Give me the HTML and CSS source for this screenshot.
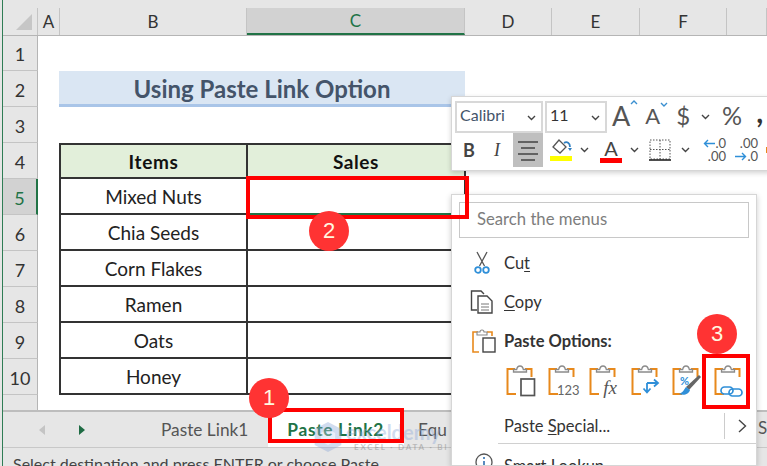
FILE: index.html
```html
<!DOCTYPE html>
<html lang="en">
<head>
<meta charset="UTF-8">
<meta name="viewport" content="width=device-width, initial-scale=1.0">
<title>Using Paste Link Option</title>
<link rel="stylesheet" href="styles.css">
</head>
<body>
  <svg class="defs" width="0" height="0">
    <symbol id="clip" viewBox="0 0 28 32">
      <path d="M9 4H1.500v25H10" fill="none" stroke="#e8891c" stroke-width="2"/>
      <path d="M19 4h6.500v8" fill="none" stroke="#e8891c" stroke-width="2"/>
      <path d="M7.500 7V4.500h3.200C11 2.500 12.200 1 14 1s3 1.500 3.300 3.500h3.200V7z" fill="#fff" stroke="#8a8a8a" stroke-width="1.300"/>
    </symbol>
  </svg>

  <div class="app">
    <div class="top-strip"></div>

    <div class="col-heads">
      <div class="corner"><span class="corner-tri"></span></div>
      <div class="col-head col-a">A</div>
      <div class="col-head col-b">B</div>
      <div class="col-head col-c selected">C</div>
      <div class="col-head col-d">D</div>
      <div class="col-head col-e">E</div>
      <div class="col-head col-f">F</div>
      <div class="col-head col-g"></div>
    </div>

    <div class="sheet">
      <div class="row row-first"><div class="row-num">1</div></div>
      <div class="row">
        <div class="row-num">2</div>
        <div class="gutter"></div>
        <div class="title-band">Using Paste Link Option</div>
      </div>
      <div class="row"><div class="row-num">3</div></div>
      <div class="row">
        <div class="row-num">4</div>
        <div class="gutter"></div>
        <div class="cell col-b head first-row">Items</div>
        <div class="cell col-c head first-row">Sales</div>
      </div>
      <div class="row">
        <div class="row-num selected">5</div>
        <div class="gutter"></div>
        <div class="cell col-b">Mixed Nuts</div>
        <div class="cell col-c active"></div>
      </div>
      <div class="row">
        <div class="row-num">6</div>
        <div class="gutter"></div>
        <div class="cell col-b">Chia Seeds</div>
        <div class="cell col-c"></div>
      </div>
      <div class="row">
        <div class="row-num">7</div>
        <div class="gutter"></div>
        <div class="cell col-b">Corn Flakes</div>
        <div class="cell col-c"></div>
      </div>
      <div class="row">
        <div class="row-num">8</div>
        <div class="gutter"></div>
        <div class="cell col-b">Ramen</div>
        <div class="cell col-c"></div>
      </div>
      <div class="row">
        <div class="row-num">9</div>
        <div class="gutter"></div>
        <div class="cell col-b">Oats</div>
        <div class="cell col-c"></div>
      </div>
      <div class="row">
        <div class="row-num">10</div>
        <div class="gutter"></div>
        <div class="cell col-b">Honey</div>
        <div class="cell col-c"></div>
      </div>
      <div class="row row-last"><div class="row-num"></div></div>
    </div>

    <div class="tabs">
      <div class="tab-arrows">
        <span class="arrow arrow-left"></span>
        <span class="arrow arrow-right"></span>
      </div>
      <div class="tab">Paste Link1</div>
      <div class="tab tab-active">Paste Link2</div>
      <div class="tab tab-next">Equ</div>
    </div>

    <div class="status">Select destination and press ENTER or choose Paste</div>
  </div>

  <div class="watermark">
    <svg class="wm-logo" width="32" height="32" viewBox="0 0 36 36">
      <path d="M18 1l15 8v18l-15 8-15-8V9z" fill="#8fa9d8"/>
      <path d="M18 9l8 4.500v9l-8 4.500-8-4.500v-9z" fill="#c9d6ee"/>
    </svg>
    <div class="wm-text">
      <div class="wm-name">exceldemy</div>
      <div class="wm-sub">EXCEL · DATA · BI</div>
    </div>
  </div>

  <!-- mini toolbar -->
  <div class="mini-bar">
    <div class="mini-row">
      <div class="combo combo-font">Calibri
        <svg class="chev" width="9" height="6" viewBox="0 0 9 6"><path d="M1 1l3.500 3.500L8 1" fill="none" stroke="#444" stroke-width="1.400"/></svg>
      </div>
      <div class="combo combo-size">11
        <svg class="chev" width="9" height="6" viewBox="0 0 9 6"><path d="M1 1l3.500 3.500L8 1" fill="none" stroke="#444" stroke-width="1.400"/></svg>
      </div>
      <div class="tool grow-a">A<svg width="8" height="6" viewBox="0 0 8 6"><path d="M1 5l3-3 3 3" fill="none" stroke="#3a8fd0" stroke-width="1.400"/></svg></div>
      <div class="tool shrink-a">A<svg width="8" height="6" viewBox="0 0 8 6"><path d="M1 1l3 3 3-3" fill="none" stroke="#3a8fd0" stroke-width="1.400"/></svg></div>
      <div class="tool dollar">$</div>
      <svg class="chev" width="9" height="6" viewBox="0 0 9 6"><path d="M1 1l3.500 3.500L8 1" fill="none" stroke="#444" stroke-width="1.400"/></svg>
      <div class="tool percent">%</div>
      <div class="tool comma">,</div>
    </div>
    <div class="mini-row mini-row-two">
      <div class="fmt fmt-b">B</div>
      <div class="fmt fmt-i">I</div>
      <div class="fmt fmt-align">
        <svg width="22" height="22" viewBox="0 0 22 22"><path d="M1 3h20M4 9h14M1 15h20M4 21h14" stroke="#444" stroke-width="1.500"/></svg>
      </div>
      <div class="fmt fmt-fill">
        <svg width="22" height="24" viewBox="0 0 22 24">
          <path d="M9 2l7 7-6 6-7-6z" fill="#fff" stroke="#555" stroke-width="1.300"/>
          <path d="M14 5c3-2 6 0 6 4" fill="none" stroke="#2f7fc1" stroke-width="1.800"/>
          <path d="M18 10l2 3 2-3z" fill="#2f7fc1"/>
          <rect y="18" width="22" height="5" fill="#ffff00"/>
        </svg>
      </div>
      <svg class="chev chev-fill" width="9" height="6" viewBox="0 0 9 6"><path d="M1 1l3.500 3.500L8 1" fill="none" stroke="#444" stroke-width="1.400"/></svg>
      <div class="fmt fmt-color"><span>A</span><span class="color-bar"></span></div>
      <svg class="chev chev-color" width="9" height="6" viewBox="0 0 9 6"><path d="M1 1l3.500 3.500L8 1" fill="none" stroke="#444" stroke-width="1.400"/></svg>
      <div class="fmt fmt-border">
        <svg width="22" height="22" viewBox="0 0 22 22">
          <path d="M1 1h20v19H1zM11 1v19M1 10.500h20" fill="none" stroke="#555" stroke-width="1" stroke-dasharray="1.500 1.500"/>
          <path d="M0 21h22" stroke="#222" stroke-width="1.600"/>
        </svg>
      </div>
      <svg class="chev chev-border" width="9" height="6" viewBox="0 0 9 6"><path d="M1 1l3.500 3.500L8 1" fill="none" stroke="#444" stroke-width="1.400"/></svg>
      <div class="dec">
        <span class="dec-line"><svg width="12" height="9" viewBox="0 0 12 9"><path d="M12 4.500H2M5 1L1.500 4.500 5 8" fill="none" stroke="#2f8fd8" stroke-width="1.400"/></svg>.0</span>
        <span class="dec-line dec-low">.00</span>
      </div>
      <div class="dec dec-two">
        <span class="dec-line">.00</span>
        <span class="dec-line dec-low"><svg width="12" height="9" viewBox="0 0 12 9"><path d="M0 4.500h10M7 1l3.500 3.500L7 8" fill="none" stroke="#2f8fd8" stroke-width="1.400"/></svg>.0</span>
      </div>
      <span class="more-dot"></span>
    </div>
  </div>

  <!-- context menu -->
  <div class="menu">
    <div class="menu-search">Search the menus</div>

    <div class="menu-item item-cut">
      <svg class="menu-icon" width="16" height="24" viewBox="0 0 16 24">
        <path d="M3 1l7.500 14M13 1L5.500 15" fill="none" stroke="#555" stroke-width="1.300"/>
        <circle cx="4" cy="19" r="2.800" fill="none" stroke="#2f8fd8" stroke-width="1.800"/>
        <circle cx="12" cy="19" r="2.800" fill="none" stroke="#2f8fd8" stroke-width="1.800"/>
      </svg>
      <span>Cu<u>t</u></span>
    </div>
    <div class="menu-item item-copy">
      <svg class="menu-icon" width="24" height="24" viewBox="0 0 24 24">
        <path d="M7 20H1.500V1H11l3 3" fill="none" stroke="#444" stroke-width="1.400"/>
        <path d="M8 6h9l5 5v12H8z" fill="#fff" stroke="#444" stroke-width="1.400"/>
        <path d="M11 14h8M11 17h8M11 20h8" stroke="#777" stroke-width="1"/>
      </svg>
      <span><u>C</u>opy</span>
    </div>
    <div class="menu-item item-options">
      <svg class="menu-icon" width="24" height="24" viewBox="0 0 24 24">
        <path d="M6 3H1v20h6M15 3h5v4" fill="none" stroke="#e8891c" stroke-width="1.600"/>
        <path d="M5 6V3h3c0-1.500 1-2 2-2s2 .5 2 2h3v3z" fill="#fff" stroke="#888" stroke-width="1.100"/>
        <rect x="11" y="9" width="12" height="14" fill="#fff" stroke="#444" stroke-width="1.400"/>
      </svg>
      <strong>Paste Options:</strong>
    </div>

    <div class="paste-icons">
      <svg class="paste-icon" width="30" height="32" viewBox="0 0 30 32">
        <use href="#clip" width="28" height="32"/>
        <rect x="15" y="14" width="13.500" height="16.500" fill="#fff" stroke="#555" stroke-width="1.700"/>
      </svg>
      <div class="paste-icon paste-values">
        <svg width="28" height="32"><use href="#clip" width="28" height="32"/></svg>
        <span class="paste-mark mark-123">123</span>
      </div>
      <div class="paste-icon paste-values">
        <svg width="28" height="32"><use href="#clip" width="28" height="32"/></svg>
        <span class="paste-mark mark-fx">fx</span>
      </div>
      <svg class="paste-icon" width="30" height="32" viewBox="0 0 30 32">
        <use href="#clip" width="28" height="32"/>
        <path d="M16 18v9M12.500 23.500L16 27.500l3.500-4M16 18h11M23 14.500l4 3.500-4 3.500" fill="none" stroke="#2f8fd8" stroke-width="1.800"/>
      </svg>
      <div class="paste-icon paste-values">
        <svg width="30" height="32" viewBox="0 0 30 32">
          <use href="#clip" width="28" height="32"/>
          <path d="M14 22L27 10l2 2-12 13z" fill="#666"/>
          <path d="M14 22c-2 2-2 5-7 7 5 2 10 0 11-4z" fill="#2f8fd8"/>
        </svg>
        <span class="paste-mark mark-pct">%</span>
      </div>
      <svg class="paste-icon" width="30" height="32" viewBox="0 0 30 32">
        <use href="#clip" width="28" height="32"/>
        <rect x="7" y="22" width="12" height="7" rx="3.500" fill="#fff" stroke="#2f8fd8" stroke-width="1.700"/>
        <rect x="15" y="24" width="13" height="7" rx="3.500" fill="none" stroke="#2f8fd8" stroke-width="1.700"/>
      </svg>
    </div>

    <div class="menu-item item-special">
      <span>Paste <u>S</u>pecial...</span>
      <span class="submenu">
        <svg width="9" height="14" viewBox="0 0 9 14"><path d="M1 1l6.500 6L1 13" fill="none" stroke="#444" stroke-width="1.400"/></svg>
      </span>
    </div>
    <div class="menu-sep"></div>
    <div class="menu-item item-lookup">
      <svg class="menu-icon" width="18" height="18" viewBox="0 0 18 18">
        <circle cx="9" cy="9" r="8" fill="none" stroke="#555" stroke-width="1.300"/>
        <path d="M9 4v2M9 8v6" stroke="#2f6fb0" stroke-width="1.600"/>
      </svg>
      <span>Smart Lookup</span>
    </div>
  </div>

  <div class="tab-cut">SU</div>

  <!-- red annotations -->
  <div class="mark-box box-cell"></div>
  <div class="mark-box box-tab"></div>
  <div class="mark-box box-link"></div>
  <div class="callout call-1">1</div>
  <div class="callout call-2">2</div>
  <div class="callout call-3">3</div>
</body>
</html>
```

FILE: styles.css
```css
* {
  box-sizing: border-box;
}
html, body {
  margin: 0;
  padding: 0;
  overflow: hidden;
}
body {
  position: relative;
  width: 767px;
  height: 466px;
  background: #e6e6e6;
  font-family: 'Lato', 'Liberation Sans', sans-serif;
  color: #222;
}
.defs {
  position: absolute;
}
.app {
  display: flex;
  flex-direction: column;
  height: 466px;
  margin-left: 2px;
  border-left: 1px solid #2f7d55;
}
.top-strip {
  height: 8px;
  flex: none;
  background: #e6e6e6;
}

/* column headers */
.col-heads {
  display: flex;
  height: 28px;
  flex: none;
  background: #e6e6e6;
  border-bottom: 1px solid #b5b5b5;
}
.corner {
  width: 35px;
  flex: none;
  display: flex;
  justify-content: flex-end;
  align-items: flex-end;
  padding: 0 5px 5px 0;
  border-right: 1px solid #c4c4c4;
}
.corner-tri {
  width: 0;
  height: 0;
  border-left: 16px solid transparent;
  border-bottom: 16px solid #c6c6c6;
}
.col-head {
  display: flex;
  align-items: center;
  justify-content: center;
  flex: none;
  font-size: 17px;
  color: #333;
  border-right: 1px solid #c4c4c4;
}
.col-a { width: 22px; }
.col-b { width: 187px; }
.col-c { width: 218px; }
.col-d { width: 87px; }
.col-e { width: 88px; }
.col-f { width: 87px; }
.col-g { flex: 1; }
.col-head.selected {
  background: #d2d2d2;
  color: #217346;
  border-bottom: 2px solid #217346;
}

/* sheet */
.sheet {
  flex: 1;
  background: #fff;
  display: flex;
  flex-direction: column;
}
.row {
  display: flex;
  height: 36px;
  flex: none;
}
.row-first {
  height: 35px;
}
.row-last {
  flex: 1;
}
.row-num {
  width: 35px;
  flex: none;
  display: flex;
  align-items: center;
  justify-content: center;
  padding-top: 2px;
  background: #e6e6e6;
  border-right: 1px solid #b5b5b5;
  border-bottom: 1px solid #c4c4c4;
  font-size: 18px;
  color: #333;
}
.row-last .row-num {
  border-bottom: 0;
}
.row-num.selected {
  background: #d2d2d2;
  color: #217346;
  border-right: 2px solid #217346;
}
.gutter {
  width: 21px;
  flex: none;
}
.title-band {
  width: 406px;
  display: flex;
  align-items: center;
  justify-content: center;
  padding-top: 2px;
  background: #dae6f3;
  border-bottom: 3px solid #a9c5e8;
  font-size: 24px;
  font-weight: 700;
  color: #44546a;
}
.cell {
  display: flex;
  align-items: center;
  justify-content: center;
  padding-top: 1px;
  border-bottom: 2px solid #333;
  border-right: 2px solid #333;
  font-size: 19px;
  color: #222;
}
.cell.col-b {
  width: 189px;
  border-left: 2px solid #333;
}
.cell.col-c {
  width: 218px;
}
.cell.head {
  background: #e2efda;
  font-weight: 700;
  letter-spacing: 0.6px;
  color: #111;
}
.cell.first-row {
  border-top: 2px solid #333;
}
.cell.active {
  border-bottom-color: #217346;
}

/* sheet tabs */
.tabs {
  display: flex;
  align-items: stretch;
  height: 38px;
  flex: none;
  background: #e6e6e6;
  border-top: 2px solid #bdbdbd;
  border-bottom: 1px solid #c8c8c8;
  font-size: 17.300px;
  color: #555;
}
.tab-arrows {
  width: 138px;
  flex: none;
  display: flex;
  align-items: center;
  gap: 34px;
  padding-left: 36px;
}
.tab-arrows::after {
  content: "";
  width: 1px;
  height: 26px;
  margin-left: 22px;
  background: #aaa;
}
.arrow {
  width: 0;
  height: 0;
  border-top: 5px solid transparent;
  border-bottom: 5px solid transparent;
}
.arrow-left {
  border-right: 6px solid #c4c4c4;
}
.arrow-right {
  border-left: 6px solid #1e6b43;
}
.tab {
  display: flex;
  align-items: center;
  padding: 0 20px;
}
.tab-active {
  background: #fff;
  padding: 0 20px 0 19px;
  font-weight: 700;
  letter-spacing: 0.7px;
  color: #217346;
}
.tab-next {
  padding-left: 14px;
}
.tab-cut {
  position: absolute;
  left: 758px;
  top: 418px;
  line-height: 20px;
  font-size: 17px;
  color: #555;
}
.status {
  height: 18px;
  flex: none;
  overflow: hidden;
  padding: 6px 0 0 10px;
  font-size: 16px;
  line-height: 20px;
  color: #444;
  white-space: nowrap;
  background: #e6e6e6;
}

/* watermark over the tabs */
.watermark {
  position: absolute;
  left: 312px;
  top: 421px;
  display: flex;
  align-items: center;
  gap: 2px;
  opacity: 0.4;
}
.wm-name {
  font-size: 20px;
  line-height: 19px;
  font-weight: 700;
  color: #8fa9d8;
}
.wm-sub {
  font-size: 8px;
  line-height: 10px;
  letter-spacing: 1.800px;
  font-weight: 700;
  color: #777;
  padding-left: 8px;
}

/* mini toolbar */
.mini-bar {
  position: absolute;
  left: 451px;
  top: 96px;
  width: 320px;
  height: 75px;
  padding: 4px 0 0 3px;
  background: #fff;
  border: 1px solid #d6d6d6;
  box-shadow: 0 2px 5px rgba(0,0,0,0.18);
}
.mini-row {
  display: flex;
  align-items: center;
  height: 32px;
}
.combo {
  position: relative;
  height: 32px;
  display: flex;
  align-items: center;
  padding: 0 0 5px 3px;
  border: 2px solid #d8d8d8;
  font-size: 16px;
  color: #44546a;
}
.combo-font {
  width: 88px;
}
.combo-size {
  width: 62px;
  margin-left: 2px;
  color: #333;
}
.combo .chev {
  position: absolute;
  right: 5px;
  top: 12px;
}
.tool {
  display: flex;
  color: #555;
  padding-bottom: 4px;
}
.grow-a {
  margin-left: 5px;
  font-size: 27px;
}
.shrink-a {
  margin-left: 7px;
  font-size: 22px;
}
.dollar {
  margin-left: 8px;
  margin-right: 11px;
  font-size: 24px;
}
.percent {
  margin-left: 12px;
  font-size: 25px;
}
.comma {
  margin-left: 14px;
  padding-bottom: 12px;
  font-size: 30px;
  font-weight: 700;
  color: #333;
}
.mini-row-two {
  height: 34px;
}
.fmt {
  flex: none;
  display: flex;
  align-items: center;
  justify-content: center;
  height: 34px;
  color: #444;
}
.fmt-b {
  width: 24px;
  margin-left: 2px;
  font-size: 18px;
  font-weight: 700;
}
.fmt-i {
  width: 32px;
  font-size: 18px;
  font-style: italic;
  font-family: 'Liberation Serif', serif;
}
.fmt-align {
  width: 30px;
  background: #bfbfbf;
}
.fmt-fill {
  width: 22px;
  margin-left: 7px;
}
.chev-fill {
  margin-left: 8px;
}
.fmt-color {
  width: 22px;
  margin-left: 11px;
  flex-direction: column;
  font-size: 20px;
  line-height: 20px;
}
.color-bar {
  width: 22px;
  height: 5px;
  background: #ff0000;
}
.chev-color {
  margin-left: 8px;
}
.fmt-border {
  width: 22px;
  margin-left: 10px;
}
.chev-border {
  margin-left: 10px;
}
.dec {
  display: flex;
  flex-direction: column;
  width: 24px;
  margin-left: 12px;
  font-size: 13px;
  line-height: 13px;
  color: #555;
  text-align: right;
}
.dec-two {
  margin-left: 8px;
}
.dec-line {
  display: flex;
  justify-content: flex-end;
  align-items: center;
}
.more-dot {
  width: 4px;
  height: 6px;
  margin-left: 8px;
  background: #e8891c;
}

/* context menu */
.menu {
  position: absolute;
  left: 451px;
  top: 194px;
  width: 306px;
  height: 272px;
  overflow: hidden;
  padding: 7px;
  background: #fff;
  border: 1px solid #d6d6d6;
  box-shadow: 0 2px 6px rgba(0,0,0,0.2);
  font-size: 16.500px;
  color: #333;
}
.menu-search {
  height: 36px;
  display: flex;
  align-items: center;
  padding: 0 0 2px 17px;
  border: 1px solid #c8c8c8;
  color: #7d7d7d;
  font-size: 16.700px;
}
.menu-item {
  position: relative;
  display: flex;
  align-items: center;
  height: 39px;
  padding-left: 45px;
  flex: none;
}
.menu-icon {
  position: absolute;
  left: 12px;
}
.item-cut {
  margin-top: 5px;
}
.item-cut .menu-icon {
  left: 15px;
}
.item-copy .menu-icon {
  left: 11px;
}
.item-options .menu-icon {
  left: 13px;
}
.menu-item u {
  text-underline-offset: 2px;
}
.paste-icons {
  display: flex;
  gap: 11.500px;
  margin-top: 5px;
  padding-left: 47px;
}
.paste-icon {
  position: relative;
  flex: none;
  width: 30px;
  height: 32px;
}
.paste-mark {
  position: absolute;
  color: #666;
}
.mark-123 {
  right: -2px;
  bottom: 0;
  font-size: 13px;
  line-height: 14px;
}
.mark-fx {
  right: 2px;
  bottom: -1px;
  font-family: 'Liberation Serif', serif;
  font-style: italic;
  font-size: 19px;
  line-height: 20px;
  color: #555;
}
.mark-pct {
  left: 8px;
  top: 9px;
  font-size: 11px;
  font-weight: 700;
  color: #2f8fd8;
}
.item-special {
  margin-top: 11px;
  height: 35px;
}
.submenu {
  position: absolute;
  right: 0;
  top: 5px;
  width: 25px;
  height: 26px;
  display: flex;
  align-items: center;
  justify-content: flex-end;
  padding-right: 2px;
  border-left: 1px solid #ccc;
}
.menu-sep {
  height: 1px;
  margin: 0 -7px 0 39px;
  background: #d0d0d0;
}
.item-lookup {
  margin-top: 2px;
}
.item-lookup .menu-icon {
  left: 16px;
  top: 7px;
}

/* red boxes and numbers */
.mark-box {
  position: absolute;
  border: 4px solid #ff0000;
}
.box-cell {
  left: 246px;
  top: 176px;
  width: 223px;
  height: 43px;
}
.box-tab {
  left: 268px;
  top: 408px;
  width: 136px;
  height: 35px;
}
.box-link {
  left: 702px;
  top: 354px;
  width: 48px;
  height: 55px;
}
.callout {
  position: absolute;
  width: 40px;
  height: 40px;
  display: flex;
  align-items: center;
  justify-content: center;
  border-radius: 50%;
  background: #ff3333;
  color: #fff8e0;
  font-family: 'Liberation Sans', sans-serif;
  font-size: 22px;
}
.call-1 {
  left: 249px;
  top: 378px;
}
.call-2 {
  left: 309px;
  top: 211px;
}
.call-3 {
  left: 697px;
  top: 314px;
}
```
